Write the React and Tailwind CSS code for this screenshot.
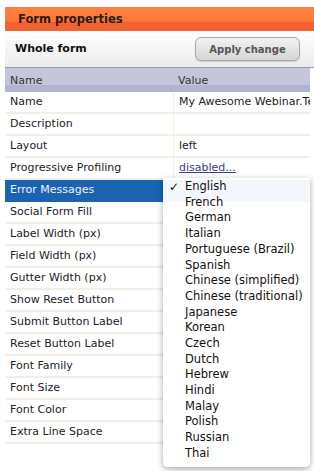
import React from 'react';

const rows = [
  { name: 'Name', value: 'My Awesome Webinar.Test' },
  { name: 'Description', value: '' },
  { name: 'Layout', value: 'left' },
  { name: 'Progressive Profiling', value: 'disabled...', link: true },
  { name: 'Error Messages', value: '', selected: true },
  { name: 'Social Form Fill', value: '' },
  { name: 'Label Width (px)', value: '' },
  { name: 'Field Width (px)', value: '' },
  { name: 'Gutter Width (px)', value: '' },
  { name: 'Show Reset Button', value: '' },
  { name: 'Submit Button Label', value: '' },
  { name: 'Reset Button Label', value: '' },
  { name: 'Font Family', value: '' },
  { name: 'Font Size', value: '' },
  { name: 'Font Color', value: '' },
  { name: 'Extra Line Space', value: '' },
];

const languages = [
  'English', 'French', 'German', 'Italian', 'Portuguese (Brazil)', 'Spanish',
  'Chinese (simplified)', 'Chinese (traditional)', 'Japanese', 'Korean', 'Czech',
  'Dutch', 'Hebrew', 'Hindi', 'Malay', 'Polish', 'Russian', 'Thai',
];

export default function App() {
  return (
    <div className="relative w-[314px] h-[471px] overflow-hidden bg-white pt-[7px] pl-[5px] font-['DejaVu_Sans',sans-serif] text-[11px] text-[#222]">
      {/* orange title bar */}
      <div className="h-[24px] bg-[linear-gradient(#ff8240_0%,#fd773a_60%,#f0602c_62%,#f26530_100%)] flex items-center pl-[13px] pt-[1px]">
        <span className="font-bold text-[11.5px] text-[#2a1a10]">Form properties</span>
      </div>

      {/* toolbar */}
      <div className="h-[37px] bg-[linear-gradient(#ffffff,#ebebeb)] flex items-center justify-between pl-[10px] pr-[14px] border-b border-[#9a9aa8]">
        <span className="font-bold text-[11px] text-[#111]">Whole form</span>
        <button className="w-[105px] h-[24px] rounded-[6px] border border-[#a8a8a8] bg-[linear-gradient(#f2f2f2,#d6d6d6)] font-bold text-[10px] text-[#555] shadow-[0_1px_1px_rgba(0,0,0,0.15)]">
          Apply change
        </button>
      </div>

      {/* table */}
      <div className="w-[305px]">
        <div className="h-[24px] flex bg-[linear-gradient(#c4c6dc_0%,#c4c6dc_70%,#b2b5d0_72%,#b2b5d0_100%)] text-[#333]">
          <div className="w-[168px] pl-[5px] pt-[5px]">Name</div>
          <div className="flex-1 pl-[5px] pt-[5px]">Value</div>
        </div>
        {rows.map((r) => (
          <div
            key={r.name}
            className={
              r.selected
                ? 'h-[22px] flex items-center bg-[#1a63b3] text-[#eef3fa] border-b border-[#1a63b3]'
                : 'h-[22px] flex items-center border-b-[2px] border-[#f3eee4]'
            }
          >
            <div className="w-[168px] pl-[5px] whitespace-nowrap">{r.name}</div>
            <div
              className={
                r.selected
                  ? 'flex-1 h-full'
                  : 'flex-1 h-full flex items-center pl-[5px] border-l border-[#f3eee4] whitespace-nowrap overflow-hidden'
              }
            >
              {r.link ? (
                <span className="underline text-[#3a3a8a]">{r.value}</span>
              ) : (
                <span>{r.value}</span>
              )}
            </div>
          </div>
        ))}
      </div>

      {/* open select menu */}
      <div className="absolute left-[163px] top-[178px] w-[147px] h-[289px] bg-white/95 rounded-b-[5px] shadow-[0_2px_6px_rgba(0,0,0,0.35)] pt-[1px] text-[11.5px] text-[#111]">
        {languages.map((l, i) => (
          <div key={l} className="h-[15.7px] flex items-center leading-none">
            <span className="w-[22px] text-center text-[12px]">{i === 0 ? '✓' : ''}</span>
            <span>{l}</span>
          </div>
        ))}
      </div>
    </div>
  );
}
